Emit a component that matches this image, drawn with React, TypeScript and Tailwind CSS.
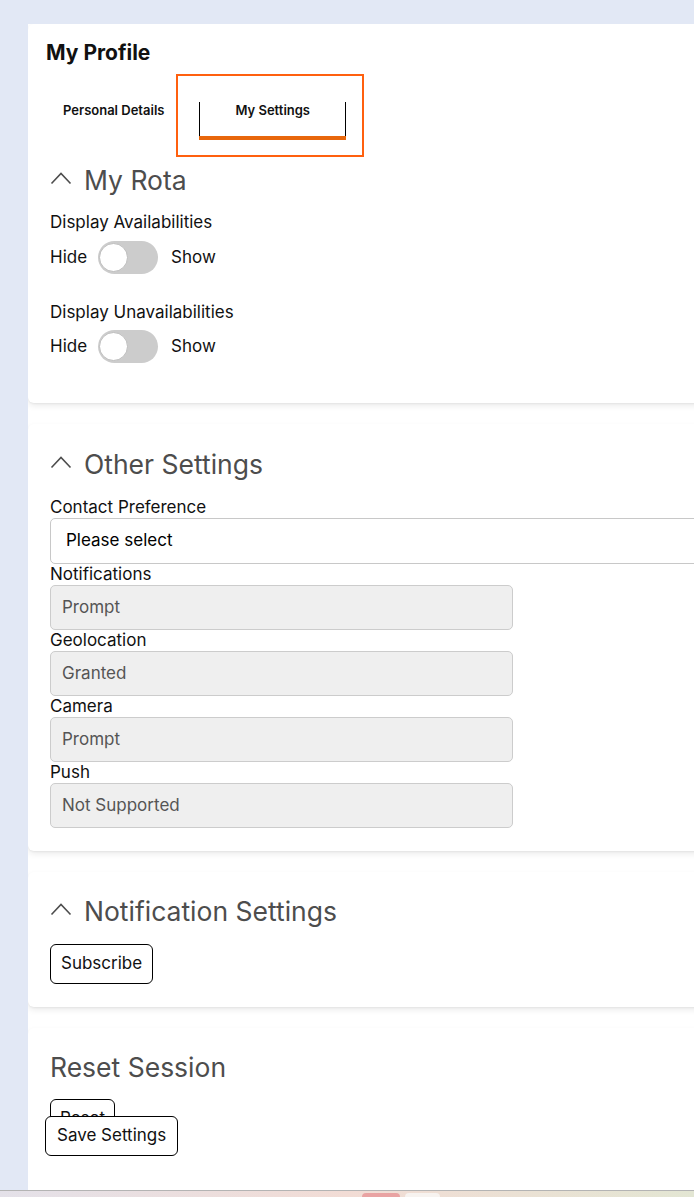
import React from 'react';

function Chevron() {
  return (
    <svg width="22" height="14" viewBox="0 0 22 14" className="mr-3 mb-1 shrink-0" fill="none">
      <polyline points="1.5,12.5 11,2.5 20.5,12.5" stroke="#4d4d4d" strokeWidth="1.6" />
    </svg>
  );
}

function SectionTitle({ title, chevron = true }: { title: string; chevron?: boolean }) {
  return (
    <div className="flex items-center h-8">
      {chevron && <Chevron />}
      <h2 className="text-[26.5px] leading-8 text-[#4d4d4d]">{title}</h2>
    </div>
  );
}

function Toggle() {
  return (
    <div className="flex items-center h-[33px] text-[17px] text-[#111]">
      <span>Hide</span>
      <div className="relative ml-[11px] w-[60px] h-[33px] rounded-full bg-[#cccccc]">
        <div className="absolute left-[1px] top-[2px] w-[29px] h-[29px] rounded-full bg-white border border-[#bdbdbd]" />
      </div>
      <span className="ml-[13px]">Show</span>
    </div>
  );
}

function ReadOnlyField({ label, value }: { label: string; value: string }) {
  return (
    <div className="flex flex-col">
      <label className="text-[17px] leading-5 text-[#111]">{label}</label>
      <div className="w-[463px] h-[45px] mt-px flex items-center px-[11px] bg-[#efefef] border border-[#cccccc] rounded-[5px] text-[17px] text-[#555]">
        {value}
      </div>
    </div>
  );
}

const card = 'bg-white rounded-md shadow-[0_1px_2px_rgba(0,0,0,0.05),0_3px_6px_rgba(0,0,0,0.08)]';
const button = 'h-10 bg-white border border-black rounded-md text-[17px] text-[#111]';

export default function App() {
  return (
    <div className="h-[1197px] w-[694px] overflow-hidden flex flex-col bg-[#e2e8f5] font-['Inter',sans-serif]">
      <div className="flex-1 min-h-0 pt-6 pl-7 overflow-hidden">
        <div className="w-[760px] h-full bg-white flex flex-col gap-[21px] overflow-hidden">
          {/* My Rota */}
          <section className={`${card} pt-[17px] pb-10`}>
            <h1 className="ml-[18px] text-[21px] leading-6 font-bold text-[#111]">My Profile</h1>
            <div className="relative mt-[37px] flex text-[13px] leading-4 font-semibold text-[#111]">
              <div className="px-[35px] pb-[22px]">Personal Details</div>
              <div className="flex flex-col">
                <div className="px-[35px] pb-[18px] border-x border-black">My Settings</div>
                <div className="h-1 bg-[#e8670c]" />
              </div>
              <div className="absolute left-[148px] top-[-28px] w-[188px] h-[83px] border-2 border-[#ff600f]" />
            </div>
            <div className="mt-6 px-[22px]">
              <SectionTitle title="My Rota" />
              <div className="mt-4 text-[17px] leading-5 text-[#111]">Display Availabilities</div>
              <div className="mt-[9px]">
                <Toggle />
              </div>
              <div className="mt-7 text-[17px] leading-5 text-[#111]">Display Unavailabilities</div>
              <div className="mt-2">
                <Toggle />
              </div>
            </div>
          </section>

          {/* Other Settings */}
          <section className={`${card} pt-6 pb-[23px] px-[22px]`}>
            <SectionTitle title="Other Settings" />
            <label className="block mt-[17px] text-[17px] leading-5 text-[#111]">Contact Preference</label>
            <div className="w-[700px] h-[46px] mt-px flex items-center px-[15px] border border-[#c8c8c8] rounded-[5px] text-[17px] text-black">
              Please select
            </div>
            <ReadOnlyField label="Notifications" value="Prompt" />
            <ReadOnlyField label="Geolocation" value="Granted" />
            <ReadOnlyField label="Camera" value="Prompt" />
            <ReadOnlyField label="Push" value="Not Supported" />
          </section>

          {/* Notification Settings */}
          <section className={`${card} pt-[23px] pb-[23px] px-[22px]`}>
            <SectionTitle title="Notification Settings" />
            <button className={`${button} mt-[17px] px-[10px]`}>Subscribe</button>
          </section>

          {/* Reset Session */}
          <section className={`${card} pt-[23px] px-[22px] h-[190px] shrink-0`}>
            <SectionTitle title="Reset Session" chevron={false} />
            <div className="relative mt-[16px]">
              <button className={`${button} px-[9px]`}>Reset</button>
              <button className={`${button} absolute left-[-5px] top-[17px] px-[11px]`}>Save Settings</button>
            </div>
          </section>
        </div>
      </div>

      {/* taskbar strip */}
      <div className="h-[7px] shrink-0 flex items-end border-t border-[#b4b4b4] bg-gradient-to-r from-[#e4e1e9] via-[#f2dcd5] to-[#e3e6d3]">
        <div className="ml-[362px] w-[38px] h-[4px] rounded-t bg-[#e9a3a3]" />
        <div className="ml-[5px] w-[35px] h-[4px] rounded-t bg-[#f7f3f0]" />
      </div>
    </div>
  );
}
